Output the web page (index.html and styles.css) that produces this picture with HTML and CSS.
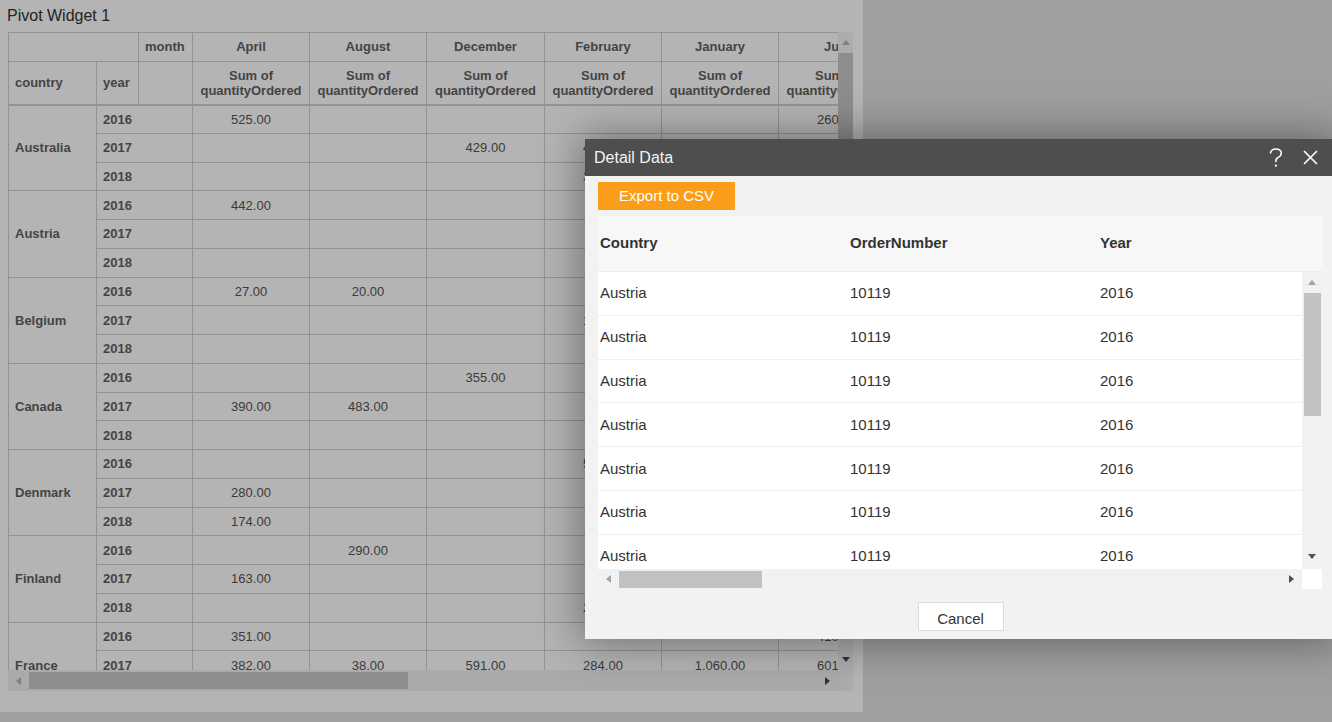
FILE: index.html
```html
<!DOCTYPE html>
<html>
<head>
<meta charset="utf-8">
<title>Pivot Widget</title>
<link rel="stylesheet" href="styles.css">
</head>
<body>
<div class="widget">
  <div class="widget-title">Pivot Widget 1</div>
  <div class="pivot">
    <div class="pivot-view">
      <table class="pv">
        <colgroup>
          <col style="width:88px"><col style="width:42px"><col style="width:54px">
          <col style="width:117px"><col style="width:117px"><col style="width:118px">
          <col style="width:117px"><col style="width:117px"><col style="width:117px">
        </colgroup>
        <tr class="h1">
          <th colspan="2"></th><th class="lft">month</th>
          <th>April</th><th>August</th><th>December</th><th>February</th><th>January</th><th>July</th>
        </tr>
        <tr class="h2">
          <th class="lft">country</th><th class="lft">year</th><th></th>
          <th>Sum of<br>quantityOrdered</th><th>Sum of<br>quantityOrdered</th><th>Sum of<br>quantityOrdered</th>
          <th>Sum of<br>quantityOrdered</th><th>Sum of<br>quantityOrdered</th><th>Sum of<br>quantityOrdered</th>
        </tr>
        <tr><th rowspan="3" class="lft">Australia</th><th colspan="2" class="lft">2016</th><td>525.00</td><td></td><td></td><td></td><td></td><td>260.00</td></tr>
        <tr><th colspan="2" class="lft">2017</th><td></td><td></td><td>429.00</td><td>443.00</td><td></td><td></td></tr>
        <tr><th colspan="2" class="lft">2018</th><td></td><td></td><td></td><td>316.00</td><td></td><td></td></tr>
        <tr><th rowspan="3" class="lft">Austria</th><th colspan="2" class="lft">2016</th><td>442.00</td><td></td><td></td><td></td><td></td><td></td></tr>
        <tr><th colspan="2" class="lft">2017</th><td></td><td></td><td></td><td></td><td></td><td></td></tr>
        <tr><th colspan="2" class="lft">2018</th><td></td><td></td><td></td><td></td><td></td><td></td></tr>
        <tr><th rowspan="3" class="lft">Belgium</th><th colspan="2" class="lft">2016</th><td>27.00</td><td>20.00</td><td></td><td></td><td></td><td></td></tr>
        <tr><th colspan="2" class="lft">2017</th><td></td><td></td><td></td><td>124.00</td><td></td><td></td></tr>
        <tr><th colspan="2" class="lft">2018</th><td></td><td></td><td></td><td></td><td></td><td></td></tr>
        <tr><th rowspan="3" class="lft">Canada</th><th colspan="2" class="lft">2016</th><td></td><td></td><td>355.00</td><td></td><td></td><td></td></tr>
        <tr><th colspan="2" class="lft">2017</th><td>390.00</td><td>483.00</td><td></td><td></td><td></td><td></td></tr>
        <tr><th colspan="2" class="lft">2018</th><td></td><td></td><td></td><td></td><td></td><td></td></tr>
        <tr><th rowspan="3" class="lft">Denmark</th><th colspan="2" class="lft">2016</th><td></td><td></td><td></td><td>512.00</td><td></td><td></td></tr>
        <tr><th colspan="2" class="lft">2017</th><td>280.00</td><td></td><td></td><td></td><td></td><td></td></tr>
        <tr><th colspan="2" class="lft">2018</th><td>174.00</td><td></td><td></td><td></td><td></td><td></td></tr>
        <tr><th rowspan="3" class="lft">Finland</th><th colspan="2" class="lft">2016</th><td></td><td>290.00</td><td></td><td></td><td></td><td></td></tr>
        <tr><th colspan="2" class="lft">2017</th><td>163.00</td><td></td><td></td><td></td><td></td><td></td></tr>
        <tr><th colspan="2" class="lft">2018</th><td></td><td></td><td></td><td>236.00</td><td></td><td></td></tr>
        <tr><th rowspan="3" class="lft">France</th><th colspan="2" class="lft">2016</th><td>351.00</td><td></td><td></td><td></td><td></td><td>410.00</td></tr>
        <tr><th colspan="2" class="lft">2017</th><td>382.00</td><td>38.00</td><td>591.00</td><td>284.00</td><td>1,060.00</td><td>601.00</td></tr>
        <tr><th colspan="2" class="lft">2018</th><td></td><td></td><td></td><td></td><td></td><td></td></tr>
      </table>
    </div>
    <div class="pv-vscroll">
      <div class="arrow-box v"><span class="tri up off"></span></div>
      <div class="pv-vthumb"></div>
      <div class="spacer"></div>
      <div class="arrow-box v"><span class="tri down on"></span></div>
    </div>
    <div class="pv-hscroll">
      <div class="arrow-box h"><span class="tri left off"></span></div>
      <div class="pv-hthumb"></div>
      <div class="spacer"></div>
      <div class="arrow-box h"><span class="tri right on"></span></div>
    </div>
    <div class="pv-corner"></div>
  </div>
</div>

<div class="dialog">
  <div class="dlg-title">
    <span class="dlg-name">Detail Data</span>
    <span class="dlg-icons">
      <svg class="ico" width="16" height="20" viewBox="0 0 16 20"><path d="M2.5 5.5 C2.5 2.5 5 1 8 1 C11 1 13.3 2.8 13.3 5.4 C13.3 8 11 8.8 9.3 10 C8.2 10.8 7.8 11.5 7.8 13.2 V14" fill="none" stroke="#fff" stroke-width="1.6"/><rect x="6.9" y="16.6" width="1.9" height="2" fill="#fff"/></svg>
      <svg class="ico" width="15" height="15" viewBox="0 0 15 15"><path d="M1 1 L14 14 M14 1 L1 14" stroke="#fff" stroke-width="1.6"/></svg>
    </span>
  </div>
  <div class="dlg-body">
    <button class="btn-export">Export to CSV</button>
    <div class="grid">
      <div class="grid-head">
        <div class="gc">Country</div><div class="gc">OrderNumber</div><div class="gc">Year</div>
      </div>
      <div class="grid-main">
        <div class="grid-rows">
          <div class="gr"><div class="gc">Austria</div><div class="gc">10119</div><div class="gc">2016</div></div>
          <div class="gr"><div class="gc">Austria</div><div class="gc">10119</div><div class="gc">2016</div></div>
          <div class="gr"><div class="gc">Austria</div><div class="gc">10119</div><div class="gc">2016</div></div>
          <div class="gr"><div class="gc">Austria</div><div class="gc">10119</div><div class="gc">2016</div></div>
          <div class="gr"><div class="gc">Austria</div><div class="gc">10119</div><div class="gc">2016</div></div>
          <div class="gr"><div class="gc">Austria</div><div class="gc">10119</div><div class="gc">2016</div></div>
          <div class="gr"><div class="gc">Austria</div><div class="gc">10119</div><div class="gc">2016</div></div>
        </div>
        <div class="g-vscroll">
          <div class="arrow-box gv"><span class="tri up goff"></span></div>
          <div class="g-vthumb"></div>
          <div class="spacer"></div>
          <div class="arrow-box gv end"><span class="tri down gon"></span></div>
        </div>
        <div class="g-hscroll">
          <div class="arrow-box gh"><span class="tri left goff"></span></div>
          <div class="g-hthumb"></div>
          <div class="spacer"></div>
          <div class="arrow-box gh"><span class="tri right gon"></span></div>
        </div>
        <div class="g-corner"></div>
      </div>
    </div>
    <div class="dlg-foot">
      <button class="btn-cancel">Cancel</button>
    </div>
  </div>
</div>
</body>
</html>
```

FILE: styles.css
```css
html, body {
  margin: 0;
  padding: 0;
}
body {
  width: 1332px;
  height: 722px;
  overflow: hidden;
  position: relative;
  background: #9f9f9f;
  font-family: "Liberation Sans", Arial, sans-serif;
}

/* ---------- widget ---------- */
.widget {
  width: 863px;
  height: 712px;
  background: #b4b4b4;
}
.widget-title {
  height: 32px;
  padding-left: 7px;
  padding-bottom: 1px;
  box-sizing: border-box;
  display: flex;
  align-items: center;
  font-size: 16px;
  color: #232323;
}
.pivot {
  margin-left: 8px;
  width: 845px;
  display: grid;
  grid-template-columns: 830px 15px;
  grid-template-rows: 638px 21px;
}
.pivot-view {
  overflow: hidden;
}
.pv {
  border-collapse: collapse;
  table-layout: fixed;
  width: 887px;
  font-size: 13px;
  color: #3a3a3a;
}
.pv th, .pv td {
  border: 1px solid #939393;
  padding: 0 6px;
  overflow: hidden;
  white-space: nowrap;
  text-align: center;
  box-sizing: border-box;
}
.pv th {
  font-weight: bold;
  color: #444;
}
.pv th.lft {
  text-align: left;
}
.pv tr.h1 { height: 29px; }
.pv tr.h1 th { padding-bottom: 2px; }
.pv tr.h2 { height: 43px; }
.pv tr.h2 th {
  border-bottom-width: 2px;
  line-height: 15px;
}
.pv tr { height: 28.75px; }
.pv td { font-weight: normal; }

/* scrollbars */
.spacer { flex: 1; }
.arrow-box {
  display: flex;
  align-items: center;
  justify-content: center;
  flex: none;
}
.tri {
  width: 0;
  height: 0;
  display: block;
}
.tri.up { border-left: 4px solid transparent; border-right: 4px solid transparent; border-bottom: 5px solid currentColor; }
.tri.down { border-left: 4px solid transparent; border-right: 4px solid transparent; border-top: 5px solid currentColor; }
.tri.left { border-top: 4px solid transparent; border-bottom: 4px solid transparent; border-right: 5px solid currentColor; }
.tri.right { border-top: 4px solid transparent; border-bottom: 4px solid transparent; border-left: 5px solid currentColor; }
.tri.off { color: #7f7f7f; }
.tri.on { color: #333; }
.tri.goff { color: #a3a3a3; }
.tri.gon { color: #505050; }

.pv-vscroll {
  background: #acacac;
  display: flex;
  flex-direction: column;
  align-items: center;
}
.arrow-box.v { height: 21px; width: 15px; }
.pv-vthumb {
  width: 15px;
  height: 350px;
  background: #8d8d8d;
}
.pv-hscroll {
  background: #aaaaaa;
  display: flex;
  align-items: center;
}
.arrow-box.h { width: 21px; height: 21px; }
.pv-hthumb {
  width: 379px;
  height: 17px;
  background: #8d8d8d;
}
.pv-corner {
  background: #acacac;
}

/* ---------- dialog ---------- */
.dialog {
  position: absolute;
  left: 585px;
  top: 139px;
  width: 751px;
  height: 500px;
  background: #f2f2f2;
  box-shadow: 0 0 40px 4px rgba(0, 0, 0, 0.38);
  display: flex;
  flex-direction: column;
}
.dlg-title {
  height: 37px;
  flex: none;
  background: #4e4e4e;
  display: flex;
  align-items: center;
  justify-content: space-between;
  padding: 0 18px 0 9px;
}
.dlg-name {
  font-size: 16px;
  color: #f4f4f4;
}
.dlg-icons {
  display: flex;
  align-items: center;
  gap: 19px;
}
.ico { display: block; }
.dlg-body {
  padding: 6px 13px 0 13px;
  display: flex;
  flex-direction: column;
}
.btn-export {
  align-self: flex-start;
  width: 137px;
  height: 28px;
  border: none;
  background: #f99d1a;
  color: #fff;
  font-family: "Liberation Sans", Arial, sans-serif;
  font-size: 15px;
  padding: 0 0 2px 0;
  cursor: pointer;
}
.grid {
  margin-top: 6px;
  width: 725px;
}
.grid-head {
  height: 56px;
  padding-bottom: 2px;
  box-sizing: border-box;
  background: #f7f7f7;
  border-bottom: 1px solid #ececec;
  display: flex;
  align-items: center;
  overflow: hidden;
  font-weight: bold;
  font-size: 15px;
  color: #333;
}
.gc {
  flex: none;
  width: 250px;
  padding-left: 2px;
  box-sizing: border-box;
  white-space: nowrap;
}
.grid-main {
  display: grid;
  grid-template-columns: 704px 20px;
  grid-template-rows: 297px 20px;
}
.grid-rows {
  background: #fff;
  overflow: hidden;
  font-size: 15px;
  color: #333;
}
.gr {
  height: 41.8px;
  padding-bottom: 1px;
  box-sizing: content-box;
  border-bottom: 1px solid #efefef;
  display: flex;
  align-items: center;
}
.g-vscroll {
  background: #f1f1f1;
  display: flex;
  flex-direction: column;
  align-items: center;
}
.arrow-box.gv { width: 20px; height: 21px; }
.arrow-box.gv.end { height: 26px; }
.g-vthumb {
  width: 17px;
  height: 123px;
  background: #c1c1c1;
}
.g-hscroll {
  background: #f1f1f1;
  display: flex;
  align-items: center;
}
.arrow-box.gh { width: 21px; height: 20px; }
.g-hthumb {
  width: 143px;
  height: 17px;
  background: #c1c1c1;
}
.g-corner {
  background: #fff;
}
.dlg-foot {
  display: flex;
  justify-content: center;
  padding-top: 13px;
}
.btn-cancel {
  width: 86px;
  height: 29px;
  background: #fff;
  border: 1px solid #dcdcdc;
  font-family: "Liberation Sans", Arial, sans-serif;
  font-size: 15px;
  color: #333;
  padding: 3px 0 0 0;
  cursor: pointer;
}
```
